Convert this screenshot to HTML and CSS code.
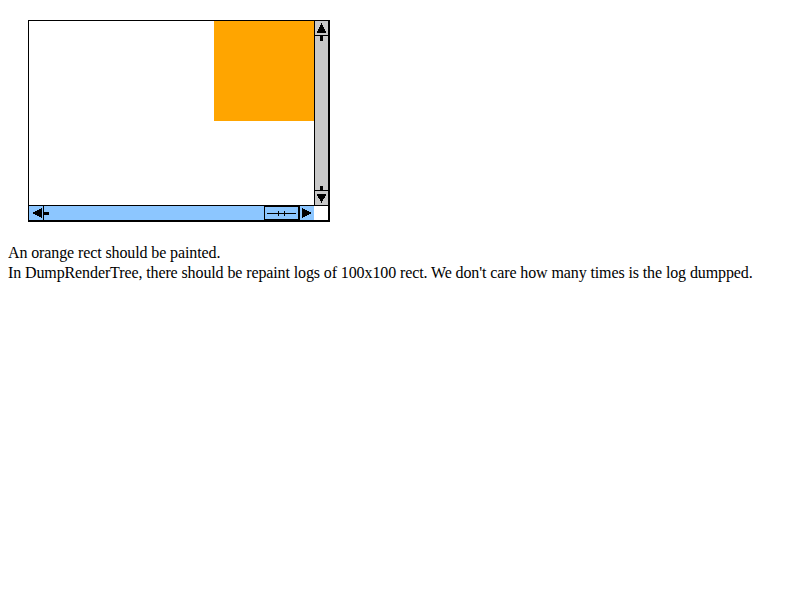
FILE: index.html
```html
<!DOCTYPE html>
<html>
<head>
<meta charset="utf-8">
<link rel="stylesheet" href="styles.css">
</head>
<body>
<div class="scroller">
  <div class="content"><div class="rect"></div></div>
  <div class="vbar">
    <div class="vbtn up"><svg width="13" height="14" viewBox="0 0 13 14"><polygon points="6.5,2 11.5,12 1.5,12" fill="#000"/></svg></div>
    <div class="vtrack"><div class="vtick"></div><div class="vtick"></div></div>
    <div class="vbtn down"><svg width="13" height="14" viewBox="0 0 13 14"><polygon points="1.5,3 11.5,3 6.5,12" fill="#000"/></svg></div>
  </div>
  <div class="hbar">
    <div class="hbtn left"><svg width="14" height="14" viewBox="0 0 14 14"><polygon points="2.5,7 12.5,2 12.5,12" fill="#000"/></svg></div>
    <div class="htrack">
      <div class="htick"></div>
      <div class="thumb"><div class="grip"><span class="gtick"></span><span class="gtick"></span></div></div>
    </div>
    <div class="hbtn right"><svg width="14" height="14" viewBox="0 0 14 14"><polygon points="2,2 11.5,7 2,12" fill="#000"/></svg></div>
  </div>
  <div class="corner"></div>
</div>
<div class="text">An orange rect should be painted.<br>In DumpRenderTree, there should be repaint logs of 100x100 rect. We don't care how many times is the log dumpped.</div>
</body>
</html>
```
FILE: styles.css
```css
html, body { background: #fff; }
body {
  margin: 8px;
  padding-top: 12px;
  font-family: "Liberation Serif", "Times New Roman", serif;
  font-size: 16px;
  color: #000;
}
.scroller {
  margin-left: 20px;
  width: 300px;
  height: 200px;
  border: 1px solid #000;
  display: grid;
  grid-template-columns: 285px 15px;
  grid-template-rows: 184px 16px;
}
.content {
  display: flex;
  justify-content: flex-end;
  align-items: flex-start;
  overflow: hidden;
  background: #fff;
}
.rect { width: 100px; height: 100px; background: #ffa500; }
.vbar {
  border-left: 1px solid #000;
  border-right: 1px solid #000;
  background: #c8c8c8;
  display: flex;
  flex-direction: column;
}
.vbtn { height: 14px; display: block; }
.vbtn svg, .hbtn svg { display: block; shape-rendering: crispEdges; }
.vbtn.up { border-bottom: 1px solid #000; }
.vbtn.down { border-top: 1px solid #000; }
.vtrack {
  flex: 1;
  display: flex;
  flex-direction: column;
  justify-content: space-between;
  align-items: center;
}
.vtick { width: 3px; height: 5px; background: #000; }
.vtick:last-child { height: 4px; }
.hbar {
  border-top: 1px solid #000;
  border-bottom: 1px solid #000;
  background: #8cc6ff;
  display: flex;
}
.hbtn { width: 14px; }
.hbtn.left { border-right: 1px solid #000; }
.hbtn.right { border-left: 1px solid #000; }
.htrack {
  flex: 1;
  display: flex;
  justify-content: space-between;
  align-items: center;
}
.htick { width: 5px; height: 3px; background: #000; }
.thumb {
  align-self: stretch;
  border: 1px solid #000;
  display: flex;
  align-items: center;
  padding: 0 2px;
  width: 29px;
}
.grip {
  flex: 1;
  height: 1px;
  background: #000;
  display: flex;
  justify-content: center;
  gap: 5px;
  align-items: center;
}
.gtick { width: 1px; height: 5px; background: #000; }
.corner {
  background: #fff;
  border-top: 1px solid #000;
  border-right: 1px solid #000;
  border-bottom: 1px solid #000;
}
.text {
  margin-top: 21px;
  line-height: 20px;
  letter-spacing: -0.11px;
}
```
